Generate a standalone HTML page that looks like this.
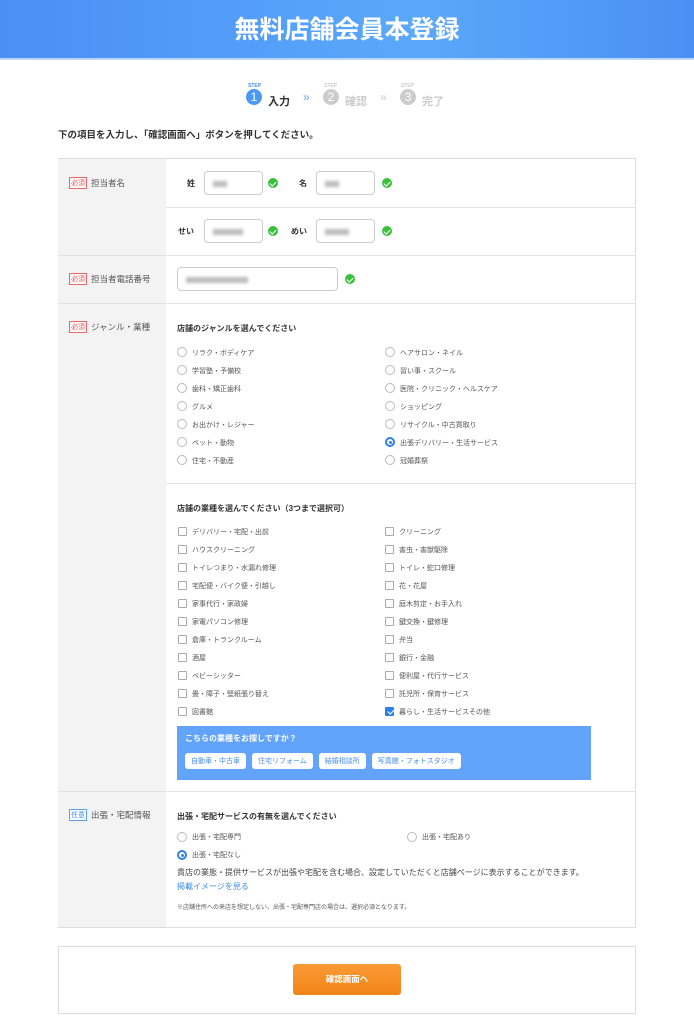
<!DOCTYPE html>
<html><head><meta charset="utf-8"><style>
*{box-sizing:border-box;margin:0;padding:0}
body{width:694px;height:1024px;background:#fff;font-family:"Liberation Sans","Noto Sans CJK JP",sans-serif;color:#333;position:relative;overflow:hidden}
.a{position:absolute;white-space:nowrap}
.hd{left:0;top:0;width:694px;height:60px;background:linear-gradient(90deg,#4a8ff5,#5aa8fb 60%,#4a90f3);border-bottom:2px solid #b9d6fb;color:#fff;font-size:25px;font-weight:bold;text-align:center;line-height:60px}
.tbl{left:58px;top:158px;width:578px;height:770px;border:1px solid #ddd;background:#fff}
.lc{left:58px;width:108px;background:#f3f3f3}
.hl{height:1px;background:#e3e3e3}
.lab{font-size:8.5px;color:#555}
.req{display:inline-block;border:1px solid #e66;color:#e55;font-size:7px;padding:0 1px;margin-right:4px;background:#fff;vertical-align:1px;font-weight:normal}
.req.b{border-color:#5aa0f0;color:#3a8de8}
.in{border:1px solid #ccc;border-radius:4px;height:24px;background:#fff}
.blur{position:absolute;left:8px;top:9px;height:6px;background:#bbb;filter:blur(1.5px)}
.ok{width:10px;height:10px;border-radius:50%;background:#3cc13c}
.ok:after{content:"";position:absolute;left:3px;top:1.5px;width:2.5px;height:5px;border:solid #fff;border-width:0 1.5px 1.5px 0;transform:rotate(45deg)}
.t{font-size:7px;color:#555}
.h{font-size:8px;font-weight:bold;color:#333}
.r{width:10px;height:10px;border:1px solid #bbb;border-radius:50%;background:#fff}
.r.on{border:2px solid #2f80ed}
.r.on:after{content:"";position:absolute;left:1.5px;top:1.5px;width:3px;height:3px;border-radius:50%;background:#2f80ed}
.c{width:9px;height:9px;border:1px solid #aaa;border-radius:1px;background:#fff}
.c.on{background:#2f80ed;border-color:#2f80ed}
.c.on:after{content:"";position:absolute;left:2.5px;top:0;width:2.5px;height:5px;border:solid #fff;border-width:0 1.5px 1.5px 0;transform:rotate(45deg)}
.tag{display:inline-block;background:#fff;border-radius:3px;color:#4a8ff0;font-size:7px;padding:3px 6px;margin-right:6px}
</style></head><body>
<div class="a hd">無料店舗会員本登録</div>

<div class="a" style="left:248px;top:83px;font-size:5px;color:#4a90f0;font-weight:bold">STEP</div>
<div class="a" style="left:246px;top:89px;width:16px;height:16px;border-radius:50%;background:#4a9af5;color:#fff;font-size:12px;text-align:center;line-height:16px">1</div>
<div class="a" style="left:268px;top:93px;font-size:11px;font-weight:bold;color:#333">入力</div>
<div class="a" style="left:303px;top:90px;font-size:12px;color:#6aa8f5">»</div>
<div class="a" style="left:324px;top:83px;font-size:5px;color:#ccc;font-weight:bold">STEP</div>
<div class="a" style="left:323px;top:89px;width:16px;height:16px;border-radius:50%;background:#ccc;color:#fff;font-size:12px;text-align:center;line-height:16px">2</div>
<div class="a" style="left:345px;top:93px;font-size:11px;font-weight:bold;color:#ccc">確認</div>
<div class="a" style="left:380px;top:90px;font-size:12px;color:#ccc">»</div>
<div class="a" style="left:401px;top:83px;font-size:5px;color:#ccc;font-weight:bold">STEP</div>
<div class="a" style="left:400px;top:89px;width:16px;height:16px;border-radius:50%;background:#ccc;color:#fff;font-size:12px;text-align:center;line-height:16px">3</div>
<div class="a" style="left:422px;top:93px;font-size:11px;font-weight:bold;color:#ccc">完了</div>

<div class="a" style="left:58px;top:127px;font-size:9.5px;font-weight:bold;color:#333">下の項目を入力し、「確認画面へ」ボタンを押してください。</div>

<div class="a tbl"></div>
<div class="a lc" style="top:159px;height:768px"></div>
<div class="a hl" style="left:166px;top:207px;width:470px"></div>
<div class="a hl" style="left:58px;top:255px;width:578px"></div>
<div class="a hl" style="left:58px;top:303px;width:578px"></div>
<div class="a hl" style="left:166px;top:483px;width:470px"></div>
<div class="a hl" style="left:58px;top:791px;width:578px"></div>

<div class="a lab" style="left:69px;top:177px"><span class="req">必須</span>担当者名</div>
<div class="a lab" style="left:69px;top:273px"><span class="req">必須</span>担当者電話番号</div>
<div class="a lab" style="left:69px;top:321px"><span class="req">必須</span>ジャンル・業種</div>
<div class="a lab" style="left:69px;top:809px"><span class="req b">任意</span>出張・宅配情報</div>

<div class="a h" style="left:187px;top:178px">姓</div>
<div class="a in" style="left:204px;top:171px;width:59px"><div class="blur" style="width:14px"></div></div>
<div class="a ok" style="left:268px;top:178px"></div>
<div class="a h" style="left:299px;top:178px">名</div>
<div class="a in" style="left:316px;top:171px;width:59px"><div class="blur" style="width:14px"></div></div>
<div class="a ok" style="left:382px;top:178px"></div>
<div class="a h" style="left:178px;top:226px">せい</div>
<div class="a in" style="left:204px;top:219px;width:59px"><div class="blur" style="width:30px"></div></div>
<div class="a ok" style="left:268px;top:226px"></div>
<div class="a h" style="left:291px;top:226px">めい</div>
<div class="a in" style="left:316px;top:219px;width:59px"><div class="blur" style="width:24px"></div></div>
<div class="a ok" style="left:382px;top:226px"></div>
<div class="a in" style="left:177px;top:267px;width:161px"><div class="blur" style="width:62px"></div></div>
<div class="a ok" style="left:345px;top:274px"></div>

<div class="a h" style="left:177px;top:323px">店舗のジャンルを選んでください</div>
<div id="g"></div>
<div class="a h" style="left:177px;top:503px">店舗の業種を選んでください（3つまで選択可）</div>
<div id="k"></div>

<div class="a" style="left:177px;top:726px;width:414px;height:54px;background:#62a3fb"></div>
<div class="a" style="left:185px;top:733px;font-size:8px;font-weight:bold;color:#fff">こちらの業種をお探しですか？</div>
<div class="a" style="left:185px;top:750px"><span class="tag">自動車・中古車</span><span class="tag">住宅リフォーム</span><span class="tag">結婚相談所</span><span class="tag">写真館・フォトスタジオ</span></div>

<div class="a h" style="left:177px;top:811px">出張・宅配サービスの有無を選んでください</div>
<div class="a r" style="left:177px;top:832px"></div><div class="a t" style="left:192px;top:832px">出張・宅配専門</div>
<div class="a r" style="left:407px;top:832px"></div><div class="a t" style="left:422px;top:832px">出張・宅配あり</div>
<div class="a r on" style="left:177px;top:850px"></div><div class="a t" style="left:192px;top:850px">出張・宅配なし</div>
<div class="a" style="left:177px;top:867px;font-size:8px;color:#444">貴店の業態・提供サービスが出張や宅配を含む場合、設定していただくと店舗ページに表示することができます。</div>
<div class="a" style="left:177px;top:881px;font-size:8px;color:#3a8de8">掲載イメージを見る</div>
<div class="a" style="left:177px;top:902px;font-size:6px;color:#555">※店舗住所への来店を想定しない、出張・宅配専門店の場合は、選択必須となります。</div>

<div class="a" style="left:58px;top:946px;width:578px;height:68px;border:1px solid #ddd"></div>
<div class="a" style="left:293px;top:964px;width:108px;height:31px;border-radius:3px;background:linear-gradient(#fb9a35,#f08517);color:#fff;font-size:8.5px;font-weight:bold;text-align:center;line-height:31px">確認画面へ</div>

<script>
var g=[["リラク・ボディケア","ヘアサロン・ネイル"],["学習塾・予備校","習い事・スクール"],["歯科・矯正歯科","医院・クリニック・ヘルスケア"],["グルメ","ショッピング"],["お出かけ・レジャー","リサイクル・中古買取り"],["ペット・動物","出張デリバリー・生活サービス"],["住宅・不動産","冠婚葬祭"]];
var k=[["デリバリー・宅配・出前","クリーニング"],["ハウスクリーニング","害虫・害獣駆除"],["トイレつまり・水漏れ修理","トイレ・蛇口修理"],["宅配便・バイク便・引越し","花・花屋"],["家事代行・家政婦","庭木剪定・お手入れ"],["家電パソコン修理","鍵交換・鍵修理"],["倉庫・トランクルーム","弁当"],["酒屋","銀行・金融"],["ベビーシッター","便利屋・代行サービス"],["畳・障子・壁紙張り替え","託児所・保育サービス"],["図書館","暮らし・生活サービスその他"]];
var h="";
g.forEach(function(p,i){var y=347+i*18;p.forEach(function(s,j){var x=j?385:177;var on=(i==5&&j==1)?" on":"";h+='<div class="a r'+on+'" style="left:'+x+'px;top:'+y+'px"></div><div class="a t" style="left:'+(x+15)+'px;top:'+(y+1)+'px">'+s+'</div>';});});
k.forEach(function(p,i){var y=527+i*18;p.forEach(function(s,j){var x=j?385:178;var on=(i==10&&j==1)?" on":"";h+='<div class="a c'+on+'" style="left:'+x+'px;top:'+y+'px"></div><div class="a t" style="left:'+(x+14)+'px;top:'+y+'px">'+s+'</div>';});});
document.getElementById("g").outerHTML=h;
</script>
</body></html>
